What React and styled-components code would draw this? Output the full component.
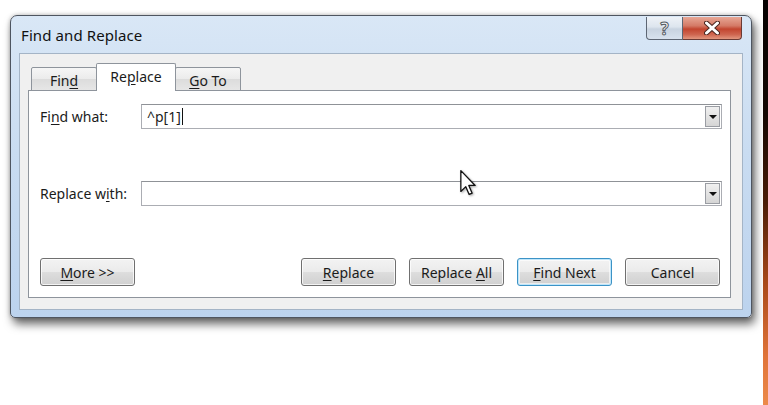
import styled, { createGlobalStyle, css } from "styled-components";

const GlobalStyle = createGlobalStyle`
  html, body {
    margin: 0;
    padding: 0;
    background: #ffffff;
  }
  body {
    font-family: "Noto Sans", "Open Sans", "DejaVu Sans", sans-serif;
    color: #1b1b1b;
  }
`;

const Page = styled.div`
  position: relative;
  width: 768px;
  height: 405px;
  display: flex;
  overflow: hidden;
  background: #ffffff;
`;

const Desktop = styled.div`
  flex: 1;
  padding: 15px 0 0 10px;
`;

const Strip = styled.div`
  flex: 0 0 5px;
  height: 100%;
  background: linear-gradient(
    to bottom,
    #050201 0%,
    #140803 28%,
    #4a1c07 50%,
    #a9491a 70%,
    #e0743a 88%,
    #ec8a4a 100%
  );
`;

const Window = styled.div`
  box-sizing: border-box;
  width: 742px;
  height: 303px;
  display: flex;
  flex-direction: column;
  padding: 0 9px 7px 9px;
  border: 1px solid #4e5560;
  border-radius: 7px 7px 5px 5px;
  background: linear-gradient(to bottom, #d9e7f6 0%, #c9dcf1 45%, #bcd3ee 100%);
  box-shadow: 3px 6px 10px rgba(0, 0, 0, 0.6), 0 0 4px rgba(0, 0, 0, 0.25);
`;

const TitleBar = styled.div`
  height: 37px;
  display: flex;
  align-items: flex-start;
  justify-content: space-between;
`;

const Title = styled.div`
  padding: 9px 0 0 1px;
  font-size: 15px;
  color: #111;
  letter-spacing: 0.1px;
`;

const Caption = styled.div`
  display: flex;
  margin: 1px 0 0 0;
`;

const CaptionButton = styled.div`
  box-sizing: border-box;
  height: 23px;
  display: flex;
  align-items: center;
  justify-content: center;
  border: 1px solid #5d6673;
  border-top: none;
  ${(p) =>
    p.close
      ? css`
          width: 59px;
          border-left: none;
          border-color: #6a3a34;
          border-radius: 0 0 4px 0;
          background: linear-gradient(
            to bottom,
            #e7a796 0%,
            #d47a66 40%,
            #c2452f 55%,
            #cf6650 80%,
            #e2977f 100%
          );
        `
      : css`
          width: 37px;
          border-radius: 0 0 0 4px;
          background: linear-gradient(
            to bottom,
            #eef2f7 0%,
            #dde5ee 45%,
            #c8d3e0 55%,
            #d8e2ee 100%
          );
        `}
`;

const HelpMark = styled.span`
  font-size: 17px;
  font-weight: 700;
  line-height: 1;
  color: #f4f4f4;
  -webkit-text-stroke: 1px #555b63;
`;

const Client = styled.div`
  box-sizing: border-box;
  flex: 1;
  display: flex;
  flex-direction: column;
  padding: 10px 11px 11px 8px;
  background: #f0f0f0;
  border: 1px solid #a4b4c6;
  margin: 0 -1px 0 -1px;
`;

const TabStrip = styled.div`
  height: 27px;
  display: flex;
  align-items: flex-end;
  padding-left: 3px;
  margin-bottom: -1px;
  position: relative;
  z-index: 1;
`;

const Tab = styled.div`
  box-sizing: border-box;
  display: flex;
  align-items: center;
  justify-content: center;
  font-size: 14px;
  color: #1b1b1b;
  border: 1px solid #8e949c;
  border-bottom: none;
  border-radius: 2px 2px 0 0;
  width: ${(p) => p.w}px;
  ${(p) =>
    p.active
      ? css`
          height: 28px;
          background: #ffffff;
          margin: 0 -1px;
          position: relative;
          z-index: 2;
          padding-bottom: 2px;
        `
      : css`
          height: 24px;
          padding-top: 2px;
          border-bottom: 1px solid #8e949c;
          background: linear-gradient(to bottom, #f6f6f6 0%, #ebebeb 50%, #dcdcdc 51%, #e6e6e6 100%);
        `}
`;

const Panel = styled.div`
  box-sizing: border-box;
  flex: 1;
  display: flex;
  flex-direction: column;
  padding: 13px 8px 11px 11px;
  background: #ffffff;
  border: 1px solid #8e949c;
`;

const Field = styled.div`
  display: grid;
  grid-template-columns: 101px 1fr;
  align-items: center;
  margin-bottom: ${(p) => p.gap || 0}px;
`;

const Label = styled.span`
  font-size: 14px;
  color: #1b1b1b;
`;

const Combo = styled.div`
  box-sizing: border-box;
  height: 25px;
  display: flex;
  align-items: center;
  border: 1px solid #abadb3;
  border-top-color: #8f9297;
  background: #ffffff;
  padding: 1px;
`;

const ComboText = styled.div`
  flex: 1;
  display: flex;
  align-items: center;
  padding-left: 4px;
  font-size: 14px;
  color: #1b1b1b;
`;

const Caret = styled.span`
  display: inline-block;
  width: 1px;
  height: 17px;
  margin-left: 1px;
  background: #111;
`;

const DropButton = styled.div`
  box-sizing: border-box;
  width: 15px;
  height: 21px;
  display: flex;
  align-items: center;
  justify-content: center;
  border: 1px solid #9a9da3;
  background: linear-gradient(to bottom, #f0f0f0 0%, #e3e3e3 50%, #d5d5d5 100%);
`;

const Arrow = styled.span`
  width: 0;
  height: 0;
  border-left: 4px solid transparent;
  border-right: 4px solid transparent;
  border-top: 4px solid #111;
`;

const Spacer = styled.div`
  flex: 1;
`;

const ButtonRow = styled.div`
  display: flex;
  align-items: center;
  margin-right: 2px;
`;

const ActionGroup = styled.div`
  display: flex;
  gap: 13px;
  margin-left: auto;
`;

const Button = styled.div`
  box-sizing: border-box;
  width: 95px;
  height: 28px;
  display: flex;
  align-items: center;
  justify-content: center;
  font-size: 14px;
  color: #1b1b1b;
  border: 1px solid #707070;
  border-radius: 3px;
  background: linear-gradient(to bottom, #f3f3f3 0%, #ebebeb 48%, #dddddd 52%, #d0d0d0 100%);
  box-shadow: inset 0 0 0 1px rgba(255, 255, 255, 0.75);
  ${(p) =>
    p.focused &&
    css`
      border-color: #3c93c6;
      box-shadow: inset 0 0 0 1px #bfe6fb, inset 0 0 0 2px rgba(255, 255, 255, 0.6);
    `}
`;

const Key = styled.span`
  text-decoration: underline;
  text-underline-offset: 2px;
`;

const Pointer = styled.svg`
  position: absolute;
  left: 460px;
  top: 170px;
  filter: drop-shadow(1px 1px 1px rgba(0, 0, 0, 0.35));
`;

export default function App() {
  return (
    <Page>
      <GlobalStyle />
      <Desktop>
        <Window>
          <TitleBar>
            <Title>Find and Replace</Title>
            <Caption>
              <CaptionButton>
                <HelpMark>?</HelpMark>
              </CaptionButton>
              <CaptionButton close>
                <svg width="16" height="14" viewBox="0 0 16 14">
                  <path
                    d="M2.5 2 L13.5 12 M13.5 2 L2.5 12"
                    stroke="#4a2620"
                    strokeWidth="5"
                    strokeLinecap="round"
                  />
                  <path
                    d="M2.5 2 L13.5 12 M13.5 2 L2.5 12"
                    stroke="#ffffff"
                    strokeWidth="3"
                    strokeLinecap="round"
                  />
                </svg>
              </CaptionButton>
            </Caption>
          </TitleBar>
          <Client>
            <TabStrip>
              <Tab w={66}>
                <span>
                  Fin<Key>d</Key>
                </span>
              </Tab>
              <Tab w={80} active>
                <span>
                  Re<Key>p</Key>lace
                </span>
              </Tab>
              <Tab w={66}>
                <span>
                  <Key>G</Key>o To
                </span>
              </Tab>
            </TabStrip>
            <Panel>
              <Field gap={52}>
                <Label>
                  Fi<Key>n</Key>d what:
                </Label>
                <Combo>
                  <ComboText>
                    ^p[1]
                    <Caret />
                  </ComboText>
                  <DropButton>
                    <Arrow />
                  </DropButton>
                </Combo>
              </Field>
              <Field>
                <Label>
                  Replace w<Key>i</Key>th:
                </Label>
                <Combo>
                  <ComboText />
                  <DropButton>
                    <Arrow />
                  </DropButton>
                </Combo>
              </Field>
              <Spacer />
              <ButtonRow>
                <Button>
                  <span>
                    <Key>M</Key>ore &gt;&gt;
                  </span>
                </Button>
                <ActionGroup>
                  <Button>
                    <span>
                      <Key>R</Key>eplace
                    </span>
                  </Button>
                  <Button>
                    <span>
                      Replace <Key>A</Key>ll
                    </span>
                  </Button>
                  <Button focused>
                    <span>
                      <Key>F</Key>ind Next
                    </span>
                  </Button>
                  <Button>Cancel</Button>
                </ActionGroup>
              </ButtonRow>
            </Panel>
          </Client>
        </Window>
      </Desktop>
      <Strip />
      <Pointer width="16" height="26" viewBox="0 0 12 20">
        <path
          d="M0.5 0.5 L0.5 16.5 L4.3 12.8 L6.9 18.8 L9.2 17.8 L6.6 11.9 L11.5 11.9 Z"
          fill="#ffffff"
          stroke="#111111"
          strokeWidth="1"
          strokeLinejoin="round"
        />
      </Pointer>
    </Page>
  );
}
